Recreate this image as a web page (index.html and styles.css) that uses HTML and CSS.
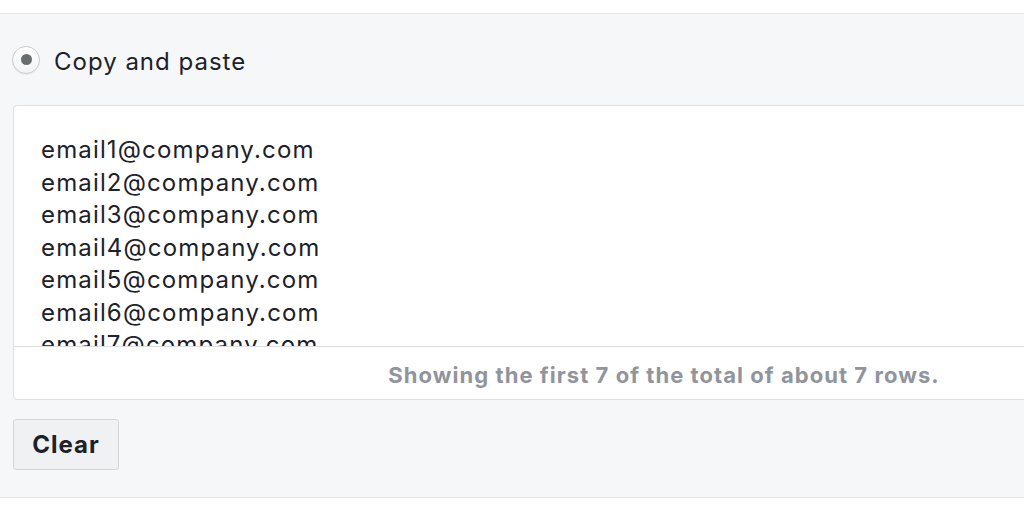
FILE: index.html
```html
<!DOCTYPE html>
<html lang="en">
<head>
<meta charset="utf-8">
<title>Copy and paste</title>
<link rel="stylesheet" href="styles.css">
</head>
<body>
<div class="top"></div>
<section class="panel">
  <label class="option">
    <span class="radio"><span class="dot"></span></span>
    <span class="option-label">Copy and paste</span>
  </label>
  <div class="box">
    <div class="entries">
      <div class="entry">email1@company.com</div>
      <div class="entry">email2@company.com</div>
      <div class="entry">email3@company.com</div>
      <div class="entry">email4@company.com</div>
      <div class="entry">email5@company.com</div>
      <div class="entry">email6@company.com</div>
      <div class="entry">email7@company.com</div>
    </div>
    <div class="summary">Showing the first 7 of the total of about 7 rows.</div>
  </div>
  <button class="btn" type="button">Clear</button>
</section>
</body>
</html>
```
FILE: styles.css
```css
html, body {
  margin: 0;
  padding: 0;
  background: #ffffff;
  overflow: hidden;
}
body {
  width: 1024px;
  height: 512px;
  font-family: Inter, "Liberation Sans", Arial, sans-serif;
  color: #1d2129;
}
.top {
  height: 13px;
}
.panel {
  background: #f6f7f9;
  border-top: 1px solid #e3e4e8;
  border-bottom: 1px solid #e3e4e8;
  padding: 0 0 27px 13px;
  width: 1400px;
}
.option {
  display: flex;
  align-items: center;
  height: 91px;
  margin-left: -1px;
}
.radio {
  width: 28px;
  height: 28px;
  border-radius: 50%;
  border: 1px solid #c9cbcf;
  background: linear-gradient(#ffffff, #f1f2f4);
  display: flex;
  align-items: center;
  justify-content: center;
  box-shadow: 0 1px 1px rgba(0,0,0,0.06);
  box-sizing: border-box;
}
.dot {
  width: 11px;
  height: 11px;
  border-radius: 50%;
  background: #6a6c70;
}
.option-label {
  margin-left: 14px;
  padding-top: 3px;
  font-size: 24px;
  letter-spacing: 1px;
  color: #1d2129;
}
.box {
  width: 1300px;
  background: #ffffff;
  border: 1px solid #dddfe2;
  border-radius: 4px;
}
.entries {
  height: 212px;
  padding: 28px 0 0 27px;
  overflow: hidden;
  border-bottom: 1px solid #dddfe2;
  font-size: 24px;
  letter-spacing: 1.15px;
  line-height: 32.5px;
  color: #1d2129;
}
.summary {
  height: 49px;
  padding-top: 3px;
  display: flex;
  align-items: center;
  justify-content: center;
  font-size: 22px;
  font-weight: 700;
  letter-spacing: 1.05px;
  color: #90949c;
}
.btn {
  display: block;
  margin-top: 19px;
  width: 106px;
  height: 51px;
  background: #f0f1f3;
  border: 1px solid #d4d6da;
  border-radius: 3px;
  font-family: inherit;
  font-size: 24px;
  font-weight: 700;
  letter-spacing: 1px;
  color: #1d2129;
  padding: 0;
}
```
